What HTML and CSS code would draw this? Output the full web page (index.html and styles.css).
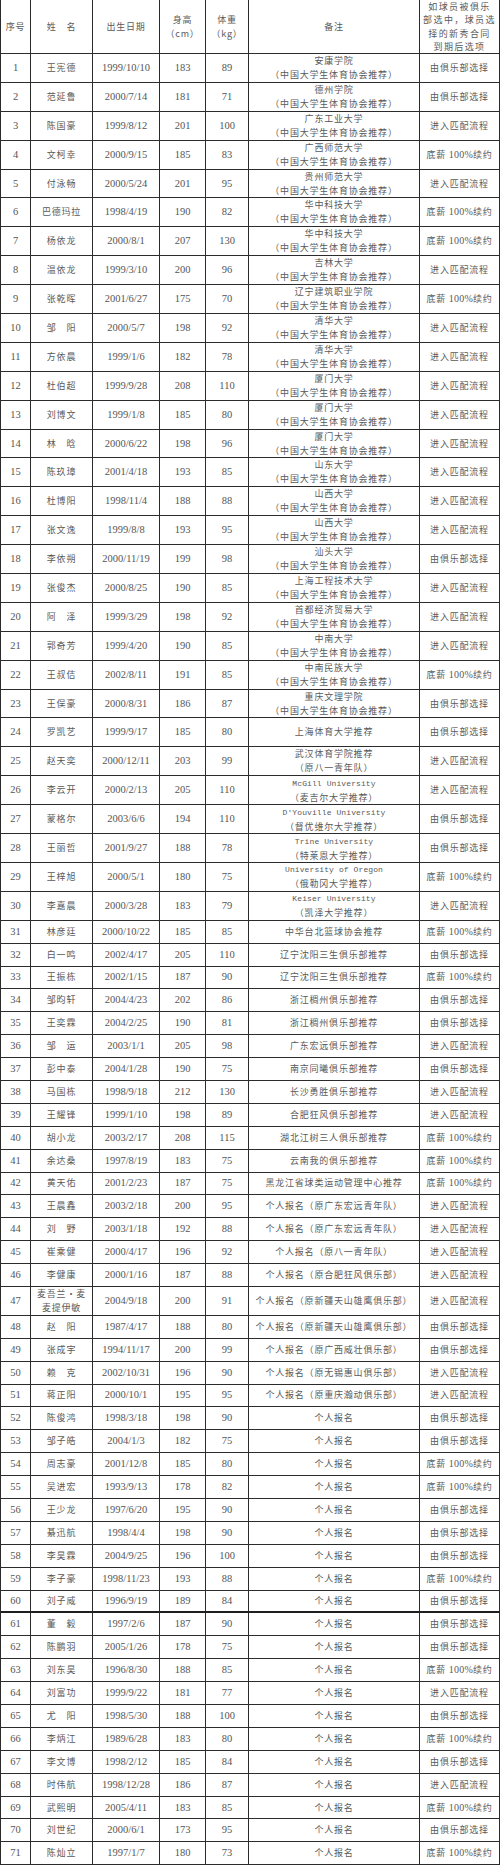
FILE: index.html
```html
<!DOCTYPE html>
<html lang="zh-CN">
<head>
<meta charset="utf-8">
<title>选秀名单</title>
<link rel="stylesheet" href="styles.css">
</head>
<body>
<div class="sheet">
<div class="row head"><div class="c cj">序号</div><div class="c cj">姓　名</div><div class="c cj">出生日期</div><div class="c cj">身高<br>（cm）</div><div class="c cj">体重<br>（kg）</div><div class="c cj">备注</div><div class="c cj hl">如球员被俱乐<br>部选中，球员选<br>择的新秀合同<br>到期后选项</div></div>
<div class="row r2"><div class="c">1</div><div class="c cj">王宪德</div><div class="c">1999/10/10</div><div class="c">183</div><div class="c">89</div><div class="c cj">安康学院<br>（中国大学生体育协会推荐）</div><div class="c cj">由俱乐部选择</div></div>
<div class="row r2"><div class="c">2</div><div class="c cj">范延鲁</div><div class="c">2000/7/14</div><div class="c">181</div><div class="c">71</div><div class="c cj">德州学院<br>（中国大学生体育协会推荐）</div><div class="c cj">由俱乐部选择</div></div>
<div class="row r2"><div class="c">3</div><div class="c cj">陈国豪</div><div class="c">1999/8/12</div><div class="c">201</div><div class="c">100</div><div class="c cj">广东工业大学<br>（中国大学生体育协会推荐）</div><div class="c cj">进入匹配流程</div></div>
<div class="row r2"><div class="c">4</div><div class="c cj">文柯幸</div><div class="c">2000/9/15</div><div class="c">185</div><div class="c">83</div><div class="c cj">广西师范大学<br>（中国大学生体育协会推荐）</div><div class="c cj"><span>底薪 <span class="num">100%</span>续约</span></div></div>
<div class="row r2"><div class="c">5</div><div class="c cj">付泳畅</div><div class="c">2000/5/24</div><div class="c">201</div><div class="c">95</div><div class="c cj">贵州师范大学<br>（中国大学生体育协会推荐）</div><div class="c cj">进入匹配流程</div></div>
<div class="row r2"><div class="c">6</div><div class="c cj">巴德玛拉</div><div class="c">1998/4/19</div><div class="c">190</div><div class="c">82</div><div class="c cj">华中科技大学<br>（中国大学生体育协会推荐）</div><div class="c cj"><span>底薪 <span class="num">100%</span>续约</span></div></div>
<div class="row r2"><div class="c">7</div><div class="c cj">杨依龙</div><div class="c">2000/8/1</div><div class="c">207</div><div class="c">130</div><div class="c cj">华中科技大学<br>（中国大学生体育协会推荐）</div><div class="c cj"><span>底薪 <span class="num">100%</span>续约</span></div></div>
<div class="row r2"><div class="c">8</div><div class="c cj">温依龙</div><div class="c">1999/3/10</div><div class="c">200</div><div class="c">96</div><div class="c cj">吉林大学<br>（中国大学生体育协会推荐）</div><div class="c cj">进入匹配流程</div></div>
<div class="row r2"><div class="c">9</div><div class="c cj">张乾晖</div><div class="c">2001/6/27</div><div class="c">175</div><div class="c">70</div><div class="c cj">辽宁建筑职业学院<br>（中国大学生体育协会推荐）</div><div class="c cj"><span>底薪 <span class="num">100%</span>续约</span></div></div>
<div class="row r2"><div class="c">10</div><div class="c cj">邹　阳</div><div class="c">2000/5/7</div><div class="c">198</div><div class="c">92</div><div class="c cj">清华大学<br>（中国大学生体育协会推荐）</div><div class="c cj">进入匹配流程</div></div>
<div class="row r2"><div class="c">11</div><div class="c cj">方依晨</div><div class="c">1999/1/6</div><div class="c">182</div><div class="c">78</div><div class="c cj">清华大学<br>（中国大学生体育协会推荐）</div><div class="c cj">进入匹配流程</div></div>
<div class="row r2"><div class="c">12</div><div class="c cj">杜伯超</div><div class="c">1999/9/28</div><div class="c">208</div><div class="c">110</div><div class="c cj">厦门大学<br>（中国大学生体育协会推荐）</div><div class="c cj">进入匹配流程</div></div>
<div class="row r2"><div class="c">13</div><div class="c cj">刘博文</div><div class="c">1999/1/8</div><div class="c">185</div><div class="c">80</div><div class="c cj">厦门大学<br>（中国大学生体育协会推荐）</div><div class="c cj">进入匹配流程</div></div>
<div class="row r2"><div class="c">14</div><div class="c cj">林　晗</div><div class="c">2000/6/22</div><div class="c">198</div><div class="c">96</div><div class="c cj">厦门大学<br>（中国大学生体育协会推荐）</div><div class="c cj">进入匹配流程</div></div>
<div class="row r2"><div class="c">15</div><div class="c cj">陈玖璋</div><div class="c">2001/4/18</div><div class="c">193</div><div class="c">85</div><div class="c cj">山东大学<br>（中国大学生体育协会推荐）</div><div class="c cj">进入匹配流程</div></div>
<div class="row r2"><div class="c">16</div><div class="c cj">杜博阳</div><div class="c">1998/11/4</div><div class="c">188</div><div class="c">88</div><div class="c cj">山西大学<br>（中国大学生体育协会推荐）</div><div class="c cj">进入匹配流程</div></div>
<div class="row r2"><div class="c">17</div><div class="c cj">张文逸</div><div class="c">1999/8/8</div><div class="c">193</div><div class="c">95</div><div class="c cj">山西大学<br>（中国大学生体育协会推荐）</div><div class="c cj">进入匹配流程</div></div>
<div class="row r2"><div class="c">18</div><div class="c cj">李依朔</div><div class="c">2000/11/19</div><div class="c">199</div><div class="c">98</div><div class="c cj">汕头大学<br>（中国大学生体育协会推荐）</div><div class="c cj">由俱乐部选择</div></div>
<div class="row r2"><div class="c">19</div><div class="c cj">张俊杰</div><div class="c">2000/8/25</div><div class="c">190</div><div class="c">85</div><div class="c cj">上海工程技术大学<br>（中国大学生体育协会推荐）</div><div class="c cj">进入匹配流程</div></div>
<div class="row r2"><div class="c">20</div><div class="c cj">阿　泽</div><div class="c">1999/3/29</div><div class="c">198</div><div class="c">92</div><div class="c cj">首都经济贸易大学<br>（中国大学生体育协会推荐）</div><div class="c cj">进入匹配流程</div></div>
<div class="row r2"><div class="c">21</div><div class="c cj">郭奇芳</div><div class="c">1999/4/20</div><div class="c">190</div><div class="c">85</div><div class="c cj">中南大学<br>（中国大学生体育协会推荐）</div><div class="c cj">进入匹配流程</div></div>
<div class="row r2"><div class="c">22</div><div class="c cj">王叔佶</div><div class="c">2002/8/11</div><div class="c">191</div><div class="c">85</div><div class="c cj">中南民族大学<br>（中国大学生体育协会推荐）</div><div class="c cj"><span>底薪 <span class="num">100%</span>续约</span></div></div>
<div class="row r2"><div class="c">23</div><div class="c cj">王俣豪</div><div class="c">2000/8/31</div><div class="c">186</div><div class="c">87</div><div class="c cj">重庆文理学院<br>（中国大学生体育协会推荐）</div><div class="c cj">由俱乐部选择</div></div>
<div class="row r2"><div class="c">24</div><div class="c cj">罗凯艺</div><div class="c">1999/9/17</div><div class="c">185</div><div class="c">80</div><div class="c cj">上海体育大学推荐</div><div class="c cj">由俱乐部选择</div></div>
<div class="row r2"><div class="c">25</div><div class="c cj">赵天奕</div><div class="c">2000/12/11</div><div class="c">203</div><div class="c">99</div><div class="c cj">武汉体育学院推荐<br>（原八一青年队）</div><div class="c cj">进入匹配流程</div></div>
<div class="row r2"><div class="c">26</div><div class="c cj">李云开</div><div class="c">2000/2/13</div><div class="c">205</div><div class="c">110</div><div class="c cj"><span><span class="en">McGill University</span><br>（麦吉尔大学推荐）</span></div><div class="c cj">进入匹配流程</div></div>
<div class="row r2"><div class="c">27</div><div class="c cj">蒙格尔</div><div class="c">2003/6/6</div><div class="c">194</div><div class="c">110</div><div class="c cj"><span><span class="en">D'Youville University</span><br>（督优维尔大学推荐）</span></div><div class="c cj">由俱乐部选择</div></div>
<div class="row r2"><div class="c">28</div><div class="c cj">王丽哲</div><div class="c">2001/9/27</div><div class="c">188</div><div class="c">78</div><div class="c cj"><span><span class="en">Trine University</span><br>（特莱恩大学推荐）</span></div><div class="c cj">由俱乐部选择</div></div>
<div class="row r2"><div class="c">29</div><div class="c cj">王梓旭</div><div class="c">2000/5/1</div><div class="c">180</div><div class="c">75</div><div class="c cj"><span><span class="en">University of Oregon</span><br>（俄勒冈大学推荐）</span></div><div class="c cj"><span>底薪 <span class="num">100%</span>续约</span></div></div>
<div class="row r2"><div class="c">30</div><div class="c cj">李嘉晨</div><div class="c">2000/3/28</div><div class="c">183</div><div class="c">79</div><div class="c cj"><span><span class="en">Keiser University</span><br>（凯泽大学推荐）</span></div><div class="c cj">进入匹配流程</div></div>
<div class="row r1"><div class="c">31</div><div class="c cj">林彦廷</div><div class="c">2000/10/22</div><div class="c">185</div><div class="c">85</div><div class="c cj">中华台北篮球协会推荐</div><div class="c cj"><span>底薪 <span class="num">100%</span>续约</span></div></div>
<div class="row r1"><div class="c">32</div><div class="c cj">白一鸣</div><div class="c">2002/4/17</div><div class="c">205</div><div class="c">110</div><div class="c cj">辽宁沈阳三生俱乐部推荐</div><div class="c cj">由俱乐部选择</div></div>
<div class="row r1"><div class="c">33</div><div class="c cj">王振栋</div><div class="c">2002/1/15</div><div class="c">187</div><div class="c">90</div><div class="c cj">辽宁沈阳三生俱乐部推荐</div><div class="c cj"><span>底薪 <span class="num">100%</span>续约</span></div></div>
<div class="row r1"><div class="c">34</div><div class="c cj">邹昀轩</div><div class="c">2004/4/23</div><div class="c">202</div><div class="c">86</div><div class="c cj">浙江稠州俱乐部推荐</div><div class="c cj">由俱乐部选择</div></div>
<div class="row r1"><div class="c">35</div><div class="c cj">王奕霖</div><div class="c">2004/2/25</div><div class="c">190</div><div class="c">81</div><div class="c cj">浙江稠州俱乐部推荐</div><div class="c cj">由俱乐部选择</div></div>
<div class="row r1"><div class="c">36</div><div class="c cj">邹　运</div><div class="c">2003/1/1</div><div class="c">205</div><div class="c">98</div><div class="c cj">广东宏远俱乐部推荐</div><div class="c cj">进入匹配流程</div></div>
<div class="row r1"><div class="c">37</div><div class="c cj">彭中泰</div><div class="c">2004/1/28</div><div class="c">190</div><div class="c">75</div><div class="c cj">南京同曦俱乐部推荐</div><div class="c cj">由俱乐部选择</div></div>
<div class="row r1"><div class="c">38</div><div class="c cj">马国栋</div><div class="c">1998/9/18</div><div class="c">212</div><div class="c">130</div><div class="c cj">长沙勇胜俱乐部推荐</div><div class="c cj">进入匹配流程</div></div>
<div class="row r1"><div class="c">39</div><div class="c cj">王耀锋</div><div class="c">1999/1/10</div><div class="c">198</div><div class="c">89</div><div class="c cj">合肥狂风俱乐部推荐</div><div class="c cj">进入匹配流程</div></div>
<div class="row r1"><div class="c">40</div><div class="c cj">胡小龙</div><div class="c">2003/2/17</div><div class="c">208</div><div class="c">115</div><div class="c cj">湖北江树三人俱乐部推荐</div><div class="c cj"><span>底薪 <span class="num">100%</span>续约</span></div></div>
<div class="row r1"><div class="c">41</div><div class="c cj">余达桑</div><div class="c">1997/8/19</div><div class="c">183</div><div class="c">75</div><div class="c cj">云南我的俱乐部推荐</div><div class="c cj"><span>底薪 <span class="num">100%</span>续约</span></div></div>
<div class="row r1"><div class="c">42</div><div class="c cj">黄天佑</div><div class="c">2001/2/23</div><div class="c">187</div><div class="c">75</div><div class="c cj">黑龙江省球类运动管理中心推荐</div><div class="c cj"><span>底薪 <span class="num">100%</span>续约</span></div></div>
<div class="row r1"><div class="c">43</div><div class="c cj">王晨鑫</div><div class="c">2003/2/18</div><div class="c">200</div><div class="c">95</div><div class="c cj">个人报名（原广东宏远青年队）</div><div class="c cj">进入匹配流程</div></div>
<div class="row r1"><div class="c">44</div><div class="c cj">刘　野</div><div class="c">2003/1/18</div><div class="c">192</div><div class="c">88</div><div class="c cj">个人报名（原广东宏远青年队）</div><div class="c cj">进入匹配流程</div></div>
<div class="row r1"><div class="c">45</div><div class="c cj">崔乘健</div><div class="c">2000/4/17</div><div class="c">196</div><div class="c">92</div><div class="c cj">个人报名（原八一青年队）</div><div class="c cj">进入匹配流程</div></div>
<div class="row r1"><div class="c">46</div><div class="c cj">李健康</div><div class="c">2000/1/16</div><div class="c">187</div><div class="c">88</div><div class="c cj">个人报名（原合肥狂风俱乐部）</div><div class="c cj">进入匹配流程</div></div>
<div class="row r2"><div class="c">47</div><div class="c cj">麦吾兰·麦<br>麦提伊敏</div><div class="c">2004/9/18</div><div class="c">200</div><div class="c">91</div><div class="c cj">个人报名（原新疆天山雄鹰俱乐部）</div><div class="c cj">进入匹配流程</div></div>
<div class="row r1"><div class="c">48</div><div class="c cj">赵　阳</div><div class="c">1987/4/17</div><div class="c">188</div><div class="c">80</div><div class="c cj">个人报名（原新疆天山雄鹰俱乐部）</div><div class="c cj">由俱乐部选择</div></div>
<div class="row r1"><div class="c">49</div><div class="c cj">张成宇</div><div class="c">1994/11/17</div><div class="c">200</div><div class="c">99</div><div class="c cj">个人报名（原广西威壮俱乐部）</div><div class="c cj">由俱乐部选择</div></div>
<div class="row r1"><div class="c">50</div><div class="c cj">赖　克</div><div class="c">2002/10/31</div><div class="c">196</div><div class="c">90</div><div class="c cj">个人报名（原无锡惠山俱乐部）</div><div class="c cj">进入匹配流程</div></div>
<div class="row r1"><div class="c">51</div><div class="c cj">蒋正阳</div><div class="c">2000/10/1</div><div class="c">195</div><div class="c">95</div><div class="c cj">个人报名（原重庆瀚动俱乐部）</div><div class="c cj">进入匹配流程</div></div>
<div class="row r1"><div class="c">52</div><div class="c cj">陈俊鸿</div><div class="c">1998/3/18</div><div class="c">198</div><div class="c">90</div><div class="c cj">个人报名</div><div class="c cj">由俱乐部选择</div></div>
<div class="row r1"><div class="c">53</div><div class="c cj">邹子皓</div><div class="c">2004/1/3</div><div class="c">182</div><div class="c">75</div><div class="c cj">个人报名</div><div class="c cj">由俱乐部选择</div></div>
<div class="row r1"><div class="c">54</div><div class="c cj">周志豪</div><div class="c">2001/12/8</div><div class="c">185</div><div class="c">80</div><div class="c cj">个人报名</div><div class="c cj"><span>底薪 <span class="num">100%</span>续约</span></div></div>
<div class="row r1"><div class="c">55</div><div class="c cj">吴进宏</div><div class="c">1993/9/13</div><div class="c">178</div><div class="c">82</div><div class="c cj">个人报名</div><div class="c cj"><span>底薪 <span class="num">100%</span>续约</span></div></div>
<div class="row r1"><div class="c">56</div><div class="c cj">王少龙</div><div class="c">1997/6/20</div><div class="c">195</div><div class="c">90</div><div class="c cj">个人报名</div><div class="c cj">由俱乐部选择</div></div>
<div class="row r1"><div class="c">57</div><div class="c cj">綦迅航</div><div class="c">1998/4/4</div><div class="c">198</div><div class="c">90</div><div class="c cj">个人报名</div><div class="c cj">由俱乐部选择</div></div>
<div class="row r1"><div class="c">58</div><div class="c cj">李昊霖</div><div class="c">2004/9/25</div><div class="c">196</div><div class="c">100</div><div class="c cj">个人报名</div><div class="c cj">由俱乐部选择</div></div>
<div class="row r1"><div class="c">59</div><div class="c cj">李子豪</div><div class="c">1998/11/23</div><div class="c">193</div><div class="c">88</div><div class="c cj">个人报名</div><div class="c cj"><span>底薪 <span class="num">100%</span>续约</span></div></div>
<div class="row r1 thick"><div class="c">60</div><div class="c cj">刘子威</div><div class="c">1996/9/19</div><div class="c">189</div><div class="c">84</div><div class="c cj">个人报名</div><div class="c cj">由俱乐部选择</div></div>
<div class="row r1"><div class="c">61</div><div class="c cj">董　毅</div><div class="c">1997/2/6</div><div class="c">187</div><div class="c">90</div><div class="c cj">个人报名</div><div class="c cj">由俱乐部选择</div></div>
<div class="row r1"><div class="c">62</div><div class="c cj">陈鹏羽</div><div class="c">2005/1/26</div><div class="c">178</div><div class="c">75</div><div class="c cj">个人报名</div><div class="c cj">由俱乐部选择</div></div>
<div class="row r1"><div class="c">63</div><div class="c cj">刘东昊</div><div class="c">1996/8/30</div><div class="c">188</div><div class="c">85</div><div class="c cj">个人报名</div><div class="c cj"><span>底薪 <span class="num">100%</span>续约</span></div></div>
<div class="row r1"><div class="c">64</div><div class="c cj">刘富功</div><div class="c">1999/9/22</div><div class="c">181</div><div class="c">77</div><div class="c cj">个人报名</div><div class="c cj">进入匹配流程</div></div>
<div class="row r1"><div class="c">65</div><div class="c cj">尤　阳</div><div class="c">1998/5/30</div><div class="c">188</div><div class="c">100</div><div class="c cj">个人报名</div><div class="c cj">由俱乐部选择</div></div>
<div class="row r1"><div class="c">66</div><div class="c cj">李炳江</div><div class="c">1989/6/28</div><div class="c">183</div><div class="c">80</div><div class="c cj">个人报名</div><div class="c cj"><span>底薪 <span class="num">100%</span>续约</span></div></div>
<div class="row r1"><div class="c">67</div><div class="c cj">李文博</div><div class="c">1998/2/12</div><div class="c">185</div><div class="c">84</div><div class="c cj">个人报名</div><div class="c cj">由俱乐部选择</div></div>
<div class="row r1"><div class="c">68</div><div class="c cj">时伟航</div><div class="c">1998/12/28</div><div class="c">186</div><div class="c">87</div><div class="c cj">个人报名</div><div class="c cj">进入匹配流程</div></div>
<div class="row r1"><div class="c">69</div><div class="c cj">武熙明</div><div class="c">2005/4/11</div><div class="c">183</div><div class="c">85</div><div class="c cj">个人报名</div><div class="c cj"><span>底薪 <span class="num">100%</span>续约</span></div></div>
<div class="row r1"><div class="c">70</div><div class="c cj">刘世纪</div><div class="c">2000/6/1</div><div class="c">173</div><div class="c">95</div><div class="c cj">个人报名</div><div class="c cj">由俱乐部选择</div></div>
<div class="row r1"><div class="c">71</div><div class="c cj">陈灿立</div><div class="c">1997/1/7</div><div class="c">180</div><div class="c">73</div><div class="c cj">个人报名</div><div class="c cj"><span>底薪 <span class="num">100%</span>续约</span></div></div>
</div>
</body>
</html>
```

FILE: styles.css
```css
html, body {
  margin: 0;
  padding: 0;
  background: #ffffff;
}

.sheet {
  width: 500px;
  box-sizing: border-box;
  border-left: 1px solid #2b2b2b;
  font-family: "Liberation Serif", "Noto Sans CJK SC", serif;
  color: #555555;
}

.row {
  display: grid;
  grid-template-columns: 30px 62px 67px 46px 43px 171px 80px;
}

.head { height: 54px; }
.r2 { height: 28.9px; }
.r1 { height: 22.9px; }

.c {
  box-sizing: border-box;
  border-right: 1px solid #2b2b2b;
  border-bottom: 1px solid #2b2b2b;
  display: flex;
  align-items: center;
  justify-content: center;
  text-align: center;
  font-size: 10.5px;
  line-height: 14px;
  white-space: nowrap;
  overflow: hidden;
}

.thick .c {
  border-bottom: 2px solid #1e1e1e;
}

.cj {
  font-family: "Noto Sans CJK SC", sans-serif;
  font-size: 9px;
  letter-spacing: 0.8px;
  color: #5a5a5a;
}

.hl {
  line-height: 13.3px;
  letter-spacing: 1.4px;
}

.num {
  font-family: "Liberation Serif", serif;
  font-size: 10px;
  letter-spacing: 0.2px;
}

.en {
  font-family: "Liberation Mono", monospace;
  font-size: 8px;
  letter-spacing: 0.1px;
}
```
